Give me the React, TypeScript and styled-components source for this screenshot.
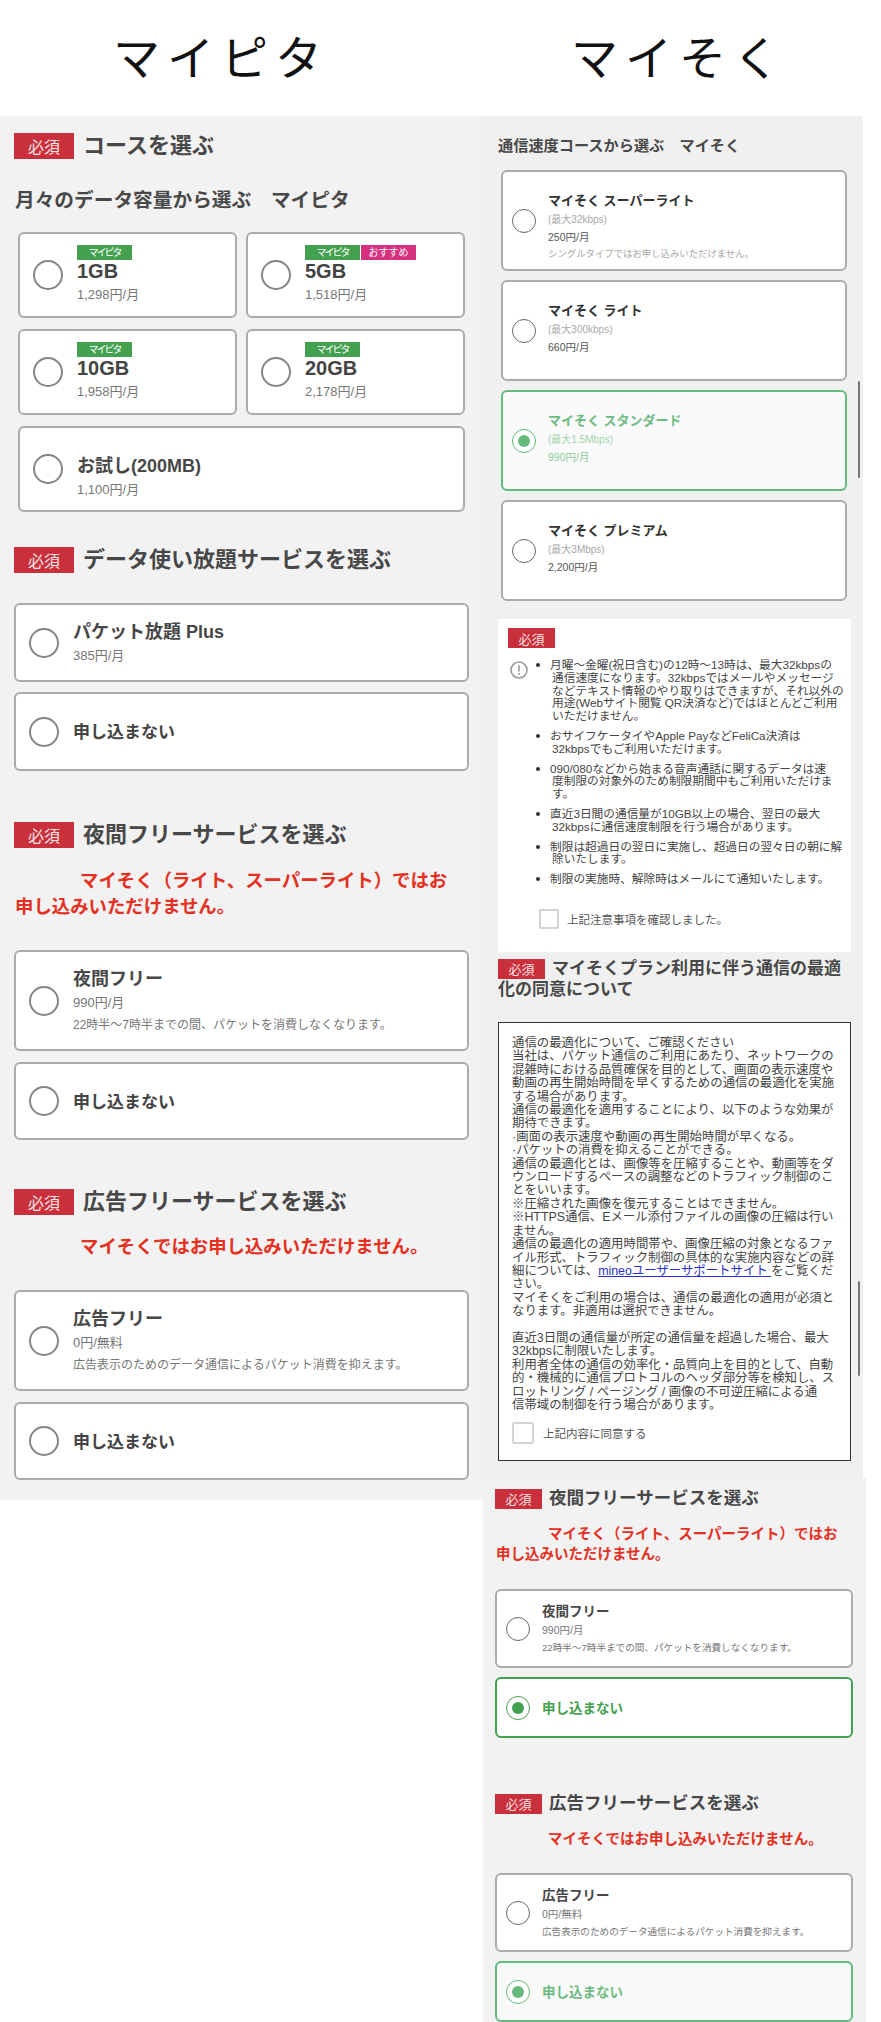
import { ReactNode } from "react";
import styled, { createGlobalStyle, css } from "styled-components";

const GlobalStyle = createGlobalStyle`
    html, body {
        margin: 0;
        padding: 0;
        background: #fff;
    }
    body {
        font-family: "Liberation Sans", "Noto Sans CJK JP", sans-serif;
        color: #3f3f3f;
    }
`;

const Page = styled.div`
    width: 881px;
    height: 2022px;
    overflow: hidden;
    display: grid;
    grid-template-columns: 483px 398px;
`;

const Column = styled.div`
    display: flex;
    flex-direction: column;
    min-width: 0;
`;

const PlanTitle = styled.h1<{ $offset: number }>`
    margin: 0;
    height: 116px;
    padding-left: ${(p) => p.$offset}px;
    font-size: 47px;
    line-height: 118px;
    font-weight: 400;
    letter-spacing: 7px;
    color: #111;
    white-space: nowrap;
`;

const LeftPanel = styled.div`
    background: #f2f2f2;
    padding: 17px 14px 20px;
`;

const TopRightPanel = styled.div`
    position: relative;
    background: #f0f0f0;
    width: 383px;
    height: 1362px;
    margin-left: -3px;
    padding: 20px 0 0 18px;
    box-sizing: border-box;
`;

const BottomRightPanel = styled.div`
    background: #f2f2f2;
    width: 383px;
    height: 544px;
    padding: 10px 0 0 12px;
    box-sizing: border-box;
    overflow: hidden;
`;

const Scrollbar = styled.div<{ $top: number; $height: number }>`
    position: absolute;
    right: 3px;
    top: ${(p) => p.$top}px;
    height: ${(p) => p.$height}px;
    width: 2px;
    background: #777;
    border-radius: 1px;
`;

const SectionHead = styled.div<{ $compact?: boolean; $gap?: number }>`
    display: flex;
    align-items: center;
    gap: ${(p) => (p.$compact ? 7 : 9)}px;
    margin-top: ${(p) => p.$gap ?? 0}px;
`;

const Badge = styled.span<{ $compact?: boolean }>`
    flex: none;
    display: flex;
    align-items: center;
    justify-content: center;
    background: #c9303c;
    color: #f6e2e2;
    font-weight: 400;
    width: ${(p) => (p.$compact ? 47 : 60)}px;
    height: ${(p) => (p.$compact ? 20 : 26)}px;
    font-size: ${(p) => (p.$compact ? 13 : 16)}px;
`;

const SectionTitle = styled.h2<{ $compact?: boolean }>`
    margin: 0;
    font-weight: 700;
    color: #484848;
    white-space: nowrap;
    font-size: ${(p) => (p.$compact ? 17.5 : 22)}px;
    line-height: ${(p) => (p.$compact ? 21 : 26)}px;
`;

const SubHeading = styled.h3<{ $compact?: boolean }>`
    margin: ${(p) => (p.$compact ? 0 : "28px 0 0 1px")};
    font-weight: 700;
    color: #484848;
    white-space: nowrap;
    font-size: ${(p) => (p.$compact ? 15.2 : 19.7)}px;
    line-height: ${(p) => (p.$compact ? 20 : 26)}px;
`;

const Warning = styled.p<{ $compact?: boolean; $indent: number; $gap: number }>`
    margin: ${(p) => p.$gap}px 0 0 1px;
    color: #e5301f;
    font-weight: 700;
    white-space: nowrap;
    text-indent: ${(p) => p.$indent}px;
    font-size: ${(p) => (p.$compact ? 14.5 : 18.4)}px;
    line-height: ${(p) => (p.$compact ? 20 : 26)}px;
`;

const Stack = styled.div<{ $top: number; $gap: number; $width: number; $left?: number }>`
    display: flex;
    flex-direction: column;
    gap: ${(p) => p.$gap}px;
    margin-top: ${(p) => p.$top}px;
    margin-left: ${(p) => p.$left ?? 0}px;
    width: ${(p) => p.$width}px;
`;

const PlanGrid = styled.div`
    display: grid;
    grid-template-columns: 219px 219px;
    grid-auto-rows: 86px;
    gap: 11px 9px;
    margin: 19px 0 0 4px;
`;

type Picked = "strong" | "soft";

const Card = styled.div<{ $h?: number; $picked?: Picked; $compact?: boolean; $wide?: boolean }>`
    box-sizing: border-box;
    height: ${(p) => (p.$h ? `${p.$h}px` : "auto")};
    display: flex;
    align-items: center;
    gap: ${(p) => (p.$compact ? 12 : 14)}px;
    padding-left: ${(p) => (p.$compact ? 9 : 13)}px;
    background: #fff;
    border: 2px solid #ababab;
    border-radius: 6px;
    ${(p) => p.$wide && "grid-column: 1 / span 2;"}
    ${(p) =>
        p.$picked === "strong" &&
        css`
            border-color: #43a04f;
        `}
    ${(p) =>
        p.$picked === "soft" &&
        css`
            border-color: #66b97d;
            background: #fafafa;
        `}
`;

const Radio = styled.span<{ $compact?: boolean; $picked?: Picked }>`
    flex: none;
    box-sizing: border-box;
    display: flex;
    align-items: center;
    justify-content: center;
    width: ${(p) => (p.$compact ? 24 : 30)}px;
    height: ${(p) => (p.$compact ? 24 : 30)}px;
    border-radius: 50%;
    background: #fff;
    border: ${(p) => (p.$compact ? 1 : 2)}px solid
        ${(p) => (p.$picked === "strong" ? "#43a04f" : p.$picked === "soft" ? "#66b97d" : p.$compact ? "#666" : "#858585")};

    &::after {
        content: "";
        display: ${(p) => (p.$picked ? "block" : "none")};
        width: 12px;
        height: 12px;
        border-radius: 50%;
        background: ${(p) => (p.$picked === "strong" ? "#43a04f" : "#66b97d")};
    }
`;

const Body = styled.div<{ $push?: number; $top?: number }>`
    display: flex;
    flex-direction: column;
    margin-top: ${(p) => p.$push ?? 0}px;
    ${(p) =>
        p.$top !== undefined &&
        css`
            align-self: flex-start;
            padding-top: ${p.$top}px;
        `}
`;

const TagRow = styled.div`
    display: flex;
    gap: 1px;
    height: 15px;
`;

const Tag = styled.span<{ $pink?: boolean }>`
    display: flex;
    align-items: center;
    justify-content: center;
    width: 55px;
    height: 15px;
    font-size: 10px;
    line-height: 15px;
    color: #fff;
    background: ${(p) => (p.$pink ? "#d6317f" : "#43a04f")};
    letter-spacing: ${(p) => (p.$pink ? 0 : "-2px")};
`;

const GbLabel = styled.div`
    font-size: 20px;
    line-height: 22px;
    font-weight: 700;
    color: #444;
`;

const Name = styled.div<{ $size?: "big" | "mid" | "small"; $tone?: string }>`
    font-weight: 700;
    white-space: nowrap;
    color: ${(p) => p.$tone ?? "#484848"};
    font-size: ${(p) => (p.$size === "small" ? 13 : p.$size === "mid" ? 13.5 : 18)}px;
    line-height: ${(p) => (p.$size === "big" || !p.$size ? 24 : 18)}px;
`;

const Price = styled.div<{ $size?: "small"; $tone?: string; $top?: number }>`
    white-space: nowrap;
    color: ${(p) => p.$tone ?? "#777"};
    margin-top: ${(p) => p.$top ?? 2}px;
    font-size: ${(p) => (p.$size === "small" ? 10.5 : 13)}px;
    line-height: ${(p) => (p.$size === "small" ? 15 : 20)}px;
`;

const Desc = styled.div<{ $size?: "small" }>`
    white-space: nowrap;
    color: #777;
    margin-top: 2px;
    font-size: ${(p) => (p.$size === "small" ? 9.6 : 12)}px;
    line-height: ${(p) => (p.$size === "small" ? 15 : 20)}px;
`;

const NoApply = styled.div<{ $compact?: boolean; $picked?: Picked }>`
    font-weight: 700;
    color: ${(p) => (p.$picked === "strong" ? "#43a04f" : p.$picked === "soft" ? "#6dbb81" : "#444")};
    font-size: ${(p) => (p.$compact ? 13.5 : 17)}px;
    margin-top: -2px;
`;

const SpeedName = styled(Name)`
    font-size: 13px;
    line-height: 18px;
`;

const SpeedCap = styled.div<{ $tone?: string }>`
    font-size: 10px;
    line-height: 14px;
    margin-top: 3px;
    color: ${(p) => p.$tone ?? "#a8a8a8"};
`;

const SpeedPrice = styled.div<{ $tone?: string }>`
    font-size: 10.5px;
    line-height: 16px;
    margin-top: 2px;
    color: ${(p) => p.$tone ?? "#555"};
`;

const SpeedNote = styled.div`
    font-size: 9.4px;
    line-height: 16px;
    margin-top: 1px;
    color: #a8a8a8;
    white-space: nowrap;
`;

const NoticeBox = styled.div`
    box-sizing: border-box;
    width: 353px;
    height: 333px;
    margin-top: 18px;
    padding: 9px 10px 0;
    background: #fff;
`;

const NoticeRow = styled.div`
    display: flex;
    margin: 11px 0 0 2px;
`;

const NoticeIcon = styled.svg`
    flex: none;
    width: 18px;
    height: 18px;
    margin-top: 2px;
`;

const NoticeList = styled.ul`
    list-style: none;
    margin: 0 0 0 6px;
    padding: 0;
    display: flex;
    flex-direction: column;
    gap: 7px;
`;

const NoticeItem = styled.li`
    display: flex;
    font-size: 11.7px;
    line-height: 12.8px;
    color: #444;
    white-space: nowrap;

    &::before {
        content: "";
        flex: none;
        width: 4px;
        height: 4px;
        margin: 4px 10px 0 2px;
        border-radius: 50%;
        background: #333;
    }
`;

const NoticeText = styled.div`
    text-indent: -2px;
    padding-left: 2px;
`;

const CheckRow = styled.label<{ $left: number; $top: number; $gap: number }>`
    display: flex;
    align-items: center;
    gap: ${(p) => p.$gap}px;
    margin: ${(p) => p.$top}px 0 0 ${(p) => p.$left}px;
    font-size: 11.5px;
    color: #555;
`;

const CheckBox = styled.span<{ $size: number }>`
    flex: none;
    box-sizing: border-box;
    width: ${(p) => p.$size}px;
    height: ${(p) => p.$size}px;
    background: #fff;
    border: 2px solid #d4d4d4;
    border-radius: 2px;
`;

const ConsentTitle = styled.h2`
    margin: 6px 0 0;
    width: 350px;
    font-size: 17px;
    line-height: 21px;
    font-weight: 700;
    color: #484848;
    white-space: nowrap;
`;

const InlineBadge = styled(Badge)`
    display: inline-flex;
    margin-right: 7px;
    vertical-align: top;
    margin-top: 1px;
`;

const ConsentBox = styled.div`
    box-sizing: border-box;
    width: 353px;
    height: 439px;
    margin-top: 22px;
    padding: 14px 0 0 13px;
    background: #fff;
    border: 1px solid #333;
`;

const ConsentText = styled.div`
    font-size: 12.4px;
    line-height: 13.4px;
    color: #444;
    white-space: nowrap;
`;

const ConsentLink = styled.a`
    color: #2a2fc9;
    text-decoration: underline;
`;

type CardProps = { h: number; name: string; price: string; desc?: string; compact?: boolean };

const ServiceCard = ({ h, name, price, desc, compact }: CardProps) => (
    <Card $h={h} $compact={compact}>
        <Radio $compact={compact} />
        <Body>
            <Name $size={compact ? "mid" : undefined}>{name}</Name>
            <Price $size={compact ? "small" : undefined}>{price}</Price>
            {desc && <Desc $size={compact ? "small" : undefined}>{desc}</Desc>}
        </Body>
    </Card>
);

const NoCard = ({ h, compact, picked }: { h: number; compact?: boolean; picked?: Picked }) => (
    <Card $h={h} $compact={compact} $picked={picked}>
        <Radio $compact={compact} $picked={picked} />
        <NoApply $compact={compact} $picked={picked}>
            申し込まない
        </NoApply>
    </Card>
);

const GbCard = ({ gb, price, pink }: { gb: string; price: string; pink?: boolean }) => (
    <Card>
        <Radio />
        <Body>
            <TagRow>
                <Tag>マイピタ</Tag>
                {pink && <Tag $pink>おすすめ</Tag>}
            </TagRow>
            <GbLabel>{gb}</GbLabel>
            <Price $top={3}>{price}</Price>
        </Body>
    </Card>
);

type Speed = { name: string; cap: string; price: string; note?: string; picked?: Picked };

const speeds: Speed[] = [
    { name: "マイそく スーパーライト", cap: "(最大32kbps)", price: "250円/月", note: "シングルタイプではお申し込みいただけません。" },
    { name: "マイそく ライト", cap: "(最大300kbps)", price: "660円/月" },
    { name: "マイそく スタンダード", cap: "(最大1.5Mbps)", price: "990円/月", picked: "soft" },
    { name: "マイそく プレミアム", cap: "(最大3Mbps)", price: "2,200円/月" },
];

const SpeedCard = ({ name, cap, price, note, picked }: Speed) => (
    <Card $h={101} $compact $picked={picked}>
        <Radio $compact $picked={picked} />
        <Body $top={20}>
            <SpeedName $tone={picked ? "#6dbb81" : "#333"}>{name}</SpeedName>
            <SpeedCap $tone={picked ? "#9fd3ac" : undefined}>{cap}</SpeedCap>
            <SpeedPrice $tone={picked ? "#8fcb9f" : undefined}>{price}</SpeedPrice>
            {note && <SpeedNote>{note}</SpeedNote>}
        </Body>
    </Card>
);

const Head = ({ children, compact, gap }: { children: ReactNode; compact?: boolean; gap?: number }) => (
    <SectionHead $compact={compact} $gap={gap}>
        <Badge $compact={compact}>必須</Badge>
        <SectionTitle $compact={compact}>{children}</SectionTitle>
    </SectionHead>
);

const App = () => (
    <Page>
        <GlobalStyle />
        <Column>
            <PlanTitle $offset={113}>マイピタ</PlanTitle>
            <LeftPanel>
                <Head>コースを選ぶ</Head>
                <SubHeading>月々のデータ容量から選ぶ　マイピタ</SubHeading>
                <PlanGrid>
                    <GbCard gb="1GB" price="1,298円/月" />
                    <GbCard gb="5GB" price="1,518円/月" pink />
                    <GbCard gb="10GB" price="1,958円/月" />
                    <GbCard gb="20GB" price="2,178円/月" />
                    <Card $wide>
                        <Radio />
                        <Body $push={16}>
                            <Name>お試し(200MB)</Name>
                            <Price>1,100円/月</Price>
                        </Body>
                    </Card>
                </PlanGrid>

                <Head gap={35}>データ使い放題サービスを選ぶ</Head>
                <Stack $top={30} $gap={10} $width={455}>
                    <ServiceCard h={79} name="パケット放題 Plus" price="385円/月" />
                    <NoCard h={79} />
                </Stack>

                <Head gap={51}>夜間フリーサービスを選ぶ</Head>
                <Warning $indent={65} $gap={20}>
                    マイそく（ライト、スーパーライト）ではお
                    <br />
                    申し込みいただけません。
                </Warning>
                <Stack $top={30} $gap={11} $width={455}>
                    <ServiceCard
                        h={101}
                        name="夜間フリー"
                        price="990円/月"
                        desc="22時半〜7時半までの間、パケットを消費しなくなります。"
                    />
                    <NoCard h={78} />
                </Stack>

                <Head gap={49}>広告フリーサービスを選ぶ</Head>
                <Warning $indent={65} $gap={19}>
                    マイそくではお申し込みいただけません。
                </Warning>
                <Stack $top={30} $gap={11} $width={455}>
                    <ServiceCard
                        h={101}
                        name="広告フリー"
                        price="0円/無料"
                        desc="広告表示のためのデータ通信によるパケット消費を抑えます。"
                    />
                    <NoCard h={78} />
                </Stack>
            </LeftPanel>
        </Column>

        <Column>
            <PlanTitle $offset={88}>マイそく</PlanTitle>
            <TopRightPanel>
                <Scrollbar $top={265} $height={97} />
                <Scrollbar $top={1165} $height={95} />
                <SubHeading $compact>通信速度コースから選ぶ　マイそく</SubHeading>
                <Stack $top={14} $gap={9} $width={346} $left={3}>
                    {speeds.map((s) => (
                        <SpeedCard key={s.name} {...s} />
                    ))}
                </Stack>

                <NoticeBox>
                    <Badge $compact>必須</Badge>
                    <NoticeRow>
                        <NoticeIcon viewBox="0 0 18 18">
                            <circle cx="9" cy="9" r="8" fill="none" stroke="#999" strokeWidth="1.6" />
                            <rect x="8.2" y="4.2" width="1.6" height="6.4" fill="#999" />
                            <rect x="8.2" y="12" width="1.6" height="1.8" fill="#999" />
                        </NoticeIcon>
                        <NoticeList>
                            <NoticeItem>
                                <NoticeText>
                                    月曜〜金曜(祝日含む)の12時〜13時は、最大32kbpsの
                                    <br />
                                    通信速度になります。32kbpsではメールやメッセージ
                                    <br />
                                    などテキスト情報のやり取りはできますが、それ以外の
                                    <br />
                                    用途(Webサイト閲覧 QR決済など)ではほとんどご利用
                                    <br />
                                    いただけません。
                                </NoticeText>
                            </NoticeItem>
                            <NoticeItem>
                                <NoticeText>
                                    おサイフケータイやApple PayなどFeliCa決済は
                                    <br />
                                    32kbpsでもご利用いただけます。
                                </NoticeText>
                            </NoticeItem>
                            <NoticeItem>
                                <NoticeText>
                                    090/080などから始まる音声通話に関するデータは速
                                    <br />
                                    度制限の対象外のため制限期間中もご利用いただけま
                                    <br />
                                    す。
                                </NoticeText>
                            </NoticeItem>
                            <NoticeItem>
                                <NoticeText>
                                    直近3日間の通信量が10GB以上の場合、翌日の最大
                                    <br />
                                    32kbpsに通信速度制限を行う場合があります。
                                </NoticeText>
                            </NoticeItem>
                            <NoticeItem>
                                <NoticeText>
                                    制限は超過日の翌日に実施し、超過日の翌々日の朝に解
                                    <br />
                                    除いたします。
                                </NoticeText>
                            </NoticeItem>
                            <NoticeItem>
                                <NoticeText>制限の実施時、解除時はメールにて通知いたします。</NoticeText>
                            </NoticeItem>
                        </NoticeList>
                    </NoticeRow>
                    <CheckRow $left={31} $top={23} $gap={8}>
                        <CheckBox $size={20} />
                        上記注意事項を確認しました。
                    </CheckRow>
                </NoticeBox>

                <ConsentTitle>
                    <InlineBadge $compact>必須</InlineBadge>
                    マイそくプラン利用に伴う通信の最適
                    <br />
                    化の同意について
                </ConsentTitle>

                <ConsentBox>
                    <ConsentText>
                        通信の最適化について、ご確認ください
                        <br />
                        当社は、パケット通信のご利用にあたり、ネットワークの
                        <br />
                        混雑時における品質確保を目的として、画面の表示速度や
                        <br />
                        動画の再生開始時間を早くするための通信の最適化を実施
                        <br />
                        する場合があります。
                        <br />
                        通信の最適化を適用することにより、以下のような効果が
                        <br />
                        期待できます。
                        <br />
                        ·画面の表示速度や動画の再生開始時間が早くなる。
                        <br />
                        ·パケットの消費を抑えることができる。
                        <br />
                        通信の最適化とは、画像等を圧縮することや、動画等をダ
                        <br />
                        ウンロードするペースの調整などのトラフィック制御のこ
                        <br />
                        とをいいます。
                        <br />
                        ※圧縮された画像を復元することはできません。
                        <br />
                        ※HTTPS通信、Eメール添付ファイルの画像の圧縮は行い
                        <br />
                        ません。
                        <br />
                        通信の最適化の適用時間帯や、画像圧縮の対象となるファ
                        <br />
                        イル形式、トラフィック制御の具体的な実施内容などの詳
                        <br />
                        細については、<ConsentLink href="#">mineoユーザーサポートサイト </ConsentLink>をご覧くだ
                        <br />
                        さい。
                        <br />
                        マイそくをご利用の場合は、通信の最適化の適用が必須と
                        <br />
                        なります。非適用は選択できません。
                        <br />
                        <br />
                        直近3日間の通信量が所定の通信量を超過した場合、最大
                        <br />
                        32kbpsに制限いたします。
                        <br />
                        利用者全体の通信の効率化・品質向上を目的として、自動
                        <br />
                        的・機械的に通信プロトコルのヘッダ部分等を検知し、ス
                        <br />
                        ロットリング / ページング / 画像の不可逆圧縮による通
                        <br />
                        信帯域の制御を行う場合があります。
                    </ConsentText>
                    <CheckRow $left={0} $top={10} $gap={9}>
                        <CheckBox $size={22} />
                        上記内容に同意する
                    </CheckRow>
                </ConsentBox>
            </TopRightPanel>

            <BottomRightPanel>
                <Head compact>夜間フリーサービスを選ぶ</Head>
                <Warning $compact $indent={52} $gap={15}>
                    マイそく（ライト、スーパーライト）ではお
                    <br />
                    申し込みいただけません。
                </Warning>
                <Stack $top={25} $gap={9} $width={358}>
                    <ServiceCard
                        compact
                        h={79}
                        name="夜間フリー"
                        price="990円/月"
                        desc="22時半〜7時半までの間、パケットを消費しなくなります。"
                    />
                    <NoCard compact h={61} picked="strong" />
                </Stack>

                <Head compact gap={55}>
                    広告フリーサービスを選ぶ
                </Head>
                <Warning $compact $indent={52} $gap={15}>
                    マイそくではお申し込みいただけません。
                </Warning>
                <Stack $top={24} $gap={9} $width={358}>
                    <ServiceCard
                        compact
                        h={79}
                        name="広告フリー"
                        price="0円/無料"
                        desc="広告表示のためのデータ通信によるパケット消費を抑えます。"
                    />
                    <NoCard compact h={61} picked="soft" />
                </Stack>
            </BottomRightPanel>
        </Column>
    </Page>
);

export default App;
